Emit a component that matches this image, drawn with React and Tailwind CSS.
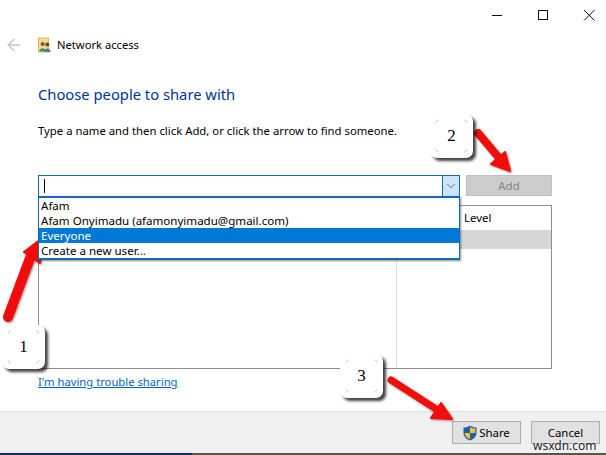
import React from 'react';
import { ArrowLeft, ChevronDown } from 'lucide-react';

const font = { fontFamily: '"Noto Sans", "Open Sans", sans-serif' };

// Faint corner ticks of the note shape
const Corners = () => (
  <svg className="absolute inset-0" width="43" height="44" viewBox="0 0 43 44" fill="none" stroke="#c8c8c8" strokeWidth="0.8">
    <path d="M6 9 Q6 6 9 6" />
    <path d="M34 6 Q37 6 37 9" />
    <path d="M6 35 Q6 38 9 38" />
    <path d="M34 38 Q37 38 37 35" />
  </svg>
);

// Numbered note stuck on the screenshot
const Badge = ({ className, children }) => (
  <div className={`absolute w-[43px] h-[44px] bg-white rounded-[7px] shadow-[3px_3px_3px_rgba(0,0,0,0.75)] flex items-center justify-center font-['Liberation_Serif',serif] text-[17px] text-black ${className}`}>
    <Corners />
    {children}
  </div>
);

const Arrows = () => (
  <svg className="absolute left-0 top-0 pointer-events-none" width="606" height="455" viewBox="0 0 606 455">
    <g fill="#f20d0d" stroke="#f20d0d" strokeLinejoin="round" style={{ filter: 'drop-shadow(1px 1px 1px rgba(90,60,60,0.6))' }}>
      <path d="M8 317 L30 258" strokeWidth="10" strokeLinecap="round" fill="none" />
      <path d="M41 239 L24 252 L40 263 Z" strokeWidth="2" />
      <path d="M478 133 L500 159" strokeWidth="8" strokeLinecap="round" fill="none" />
      <path d="M510 171 L491 164 L505 152 Z" strokeWidth="2" />
      <path d="M391 380 L436 409" strokeWidth="7" strokeLinecap="round" fill="none" />
      <path d="M452 419 L431 418 L441 403 Z" strokeWidth="2" />
    </g>
  </svg>
);

const WindowButtons = () => (
  <div className="flex justify-end items-center h-[29px] pr-[10px] gap-[32px] shrink-0">
    <svg width="14" height="14" viewBox="0 0 14 14" stroke="#111" fill="none"><path d="M2 7.5 H12" /></svg>
    <svg width="14" height="14" viewBox="0 0 14 14" stroke="#111" fill="none"><rect x="2.5" y="2.5" width="9" height="9" /></svg>
    <svg width="14" height="14" viewBox="0 0 14 14" stroke="#111" fill="none"><path d="M2 2 L12.5 12.5 M12.5 2 L2 12.5" /></svg>
  </div>
);

const NetworkIcon = () => (
  <svg width="13" height="16" viewBox="0 0 14 16">
    <rect x="0.5" y="0.5" width="11" height="15" fill="#f5dc8c" stroke="#d9b850" />
    <circle cx="5" cy="7" r="2.2" fill="#7a5a3c" />
    <path d="M1.5 15 C1.5 10.5 8 10.5 8 15 Z" fill="#4f8a5a" />
    <circle cx="10" cy="7.5" r="2.2" fill="#5a4a40" />
    <path d="M6.5 15.5 C6.5 10.5 13.5 10.5 13.5 15.5 Z" fill="#3f7fa8" />
  </svg>
);

const ShieldIcon = () => (
  <svg width="14" height="16" viewBox="0 0 14 16">
    <path d="M7 0.5 C9 2 11 2.5 13.5 2.5 L13.5 8 C13.5 12 10 14.5 7 15.5 C4 14.5 0.5 12 0.5 8 L0.5 2.5 C3 2.5 5 2 7 0.5 Z" fill="#1f5fa8" />
    <path d="M7 2 L7 8 L12.3 8 L12.3 3.6 C10.5 3.5 8.5 3 7 2 Z" fill="#f4c430" />
    <path d="M7 8 L7 14.2 C4.5 13.2 1.8 11.2 1.7 8 Z" fill="#f4c430" />
  </svg>
);

const dropdownItems = ['Afam', 'Afam Onyimadu (afamonyimadu@gmail.com)', 'Everyone', 'Create a new user...'];

export default function App() {
  return (
    <div className="relative w-[606px] h-[455px] overflow-hidden bg-white flex flex-col text-[11.4px] text-black" style={font}>
      <WindowButtons />

      <div className="flex flex-col flex-1 min-h-0 pl-[38px] pr-[54px]">
        <div className="relative flex items-center gap-[6px] h-[16px] mt-[8px]">
          <ArrowLeft size={20} strokeWidth={1.6} className="absolute left-[-34px] text-[#c4c4c4]" />
          <NetworkIcon />
          <span className="leading-[16px] mt-[-1px] text-[11.2px]">Network access</span>
        </div>

        <h1 className="mt-[30px] text-[14.75px] leading-[22px] text-[#003399]">Choose people to share with</h1>
        <p className="mt-[18px] leading-[16px] text-[11.33px]">Type a name and then click Add, or click the arrow to find someone.</p>

        <div className="relative mt-[36px] flex gap-[6px] h-[22px]">
          <div className="relative w-[422px] h-[22px] border border-[#0f6cbd] flex justify-between">
            <div className="ml-[5px] mt-[3px] w-px h-[14px] bg-black" />
            <div className="w-[17px] bg-[#cce4f7] border-l border-[#0f6cbd] flex items-center justify-center">
              <ChevronDown size={14} strokeWidth={1.1} className="text-[#333]" />
            </div>
            {/* open dropdown */}
            <ul className="absolute z-10 left-[-1px] top-[20px] w-[422px] h-[64px] bg-white border-y-2 border-x border-[#0f6cbd] text-[11.55px] shadow-[1px_1px_2px_rgba(0,0,0,0.45)]">
              {dropdownItems.map((item) => (
                <li
                  key={item}
                  className={`h-[15px] leading-[15px] pl-[2px] whitespace-nowrap ${item === 'Everyone' ? 'bg-[#0078d7] text-white' : ''}`}
                >
                  {item}
                </li>
              ))}
            </ul>
          </div>
          <div className="w-[86px] h-[21px] bg-[#cccccc] border border-[#c0c0c0] text-[#838383] flex items-center justify-center">Add</div>
        </div>

        {/* people table */}
        <div className="mt-[8px] h-[164px] w-[514px] border border-[#8c8c8c] flex shrink-0">
          <div className="w-[358px] border-r border-[#e0e0e0]" />
          <div className="flex-1 flex flex-col">
            <div className="h-[24px] pl-[67px] pt-[4px] leading-[16px]">Level</div>
            <div className="h-[19px] bg-[#d6d6d6]" />
          </div>
        </div>

        <a className="mt-[4px] leading-[17px] text-[11.25px] text-[#0066cc] underline w-fit">I'm having trouble sharing</a>
      </div>

      {/* footer */}
      <div className="h-[42px] shrink-0 bg-[#f0f0f0] border-t border-[#dfdfdf] flex justify-end gap-[10px] pt-[9px] pr-[6px]">
        <div className="w-[69px] h-[23px] bg-[#e1e1e1] border border-[#adadad] flex items-center justify-center gap-[2px]">
          <ShieldIcon />
          <span>Share</span>
        </div>
        <div className="w-[69px] h-[23px] bg-[#e1e1e1] border border-[#adadad] flex items-center justify-center">Cancel</div>
      </div>
      <div className="h-[2px] shrink-0 flex">
        <div className="w-[192px] bg-[#14305c]" />
        <div className="flex-1 bg-[#5c5546]" />
      </div>

      <Arrows />
      <Badge className="left-[2px] top-[325px]">1</Badge>
      <Badge className="left-[430px] top-[114px]">2</Badge>
      <Badge className="left-[340px] top-[354px]">3</Badge>

      <span className="absolute left-[533px] top-[438px] text-[12px] leading-[16px] text-[#222] [text-shadow:0_0_2px_#fff]">wsxdn.com</span>
    </div>
  );
}
